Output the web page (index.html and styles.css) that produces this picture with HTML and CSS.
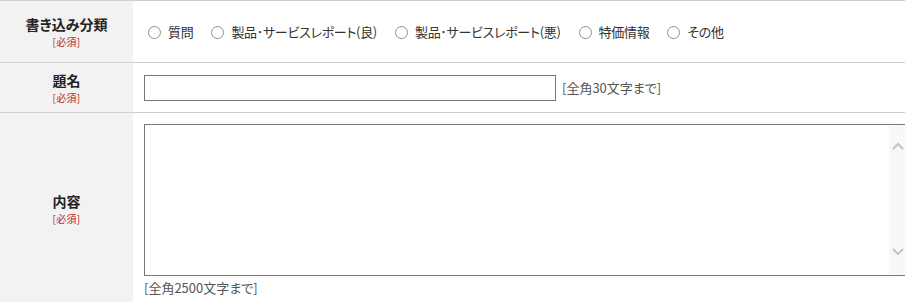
FILE: index.html
```html
<!DOCTYPE html>
<html lang="ja">
<head>
    <meta charset="UTF-8">
    <meta name="viewport" content="width=device-width, initial-scale=1.0">
    <title>投稿フォーム</title>
    <link rel="stylesheet" href="styles.css">
</head>
<body>
    <form class="form-table" id="postForm">
        <div class="form-row row-type">
            <div class="row-head">
                <span class="head-title">書き込み分類</span>
                <span class="required">[必須]</span>
            </div>
            <div class="row-body">
                <label class="radio-item"><input type="radio" name="category" value="1"><span>質問</span></label>
                <label class="radio-item"><input type="radio" name="category" value="2"><span>製品･サービスレポート(良)</span></label>
                <label class="radio-item"><input type="radio" name="category" value="3"><span>製品･サービスレポート(悪)</span></label>
                <label class="radio-item"><input type="radio" name="category" value="4"><span>特価情報</span></label>
                <label class="radio-item"><input type="radio" name="category" value="5"><span>その他</span></label>
            </div>
        </div>

        <div class="form-row row-title">
            <div class="row-head">
                <span class="head-title">題名</span>
                <span class="required">[必須]</span>
            </div>
            <div class="row-body">
                <input type="text" class="text-input" id="title">
                <span class="note">[全角30文字まで]</span>
            </div>
        </div>

        <div class="form-row row-content">
            <div class="row-head">
                <span class="head-title">内容</span>
                <span class="required">[必須]</span>
            </div>
            <div class="row-body body-column">
                <div class="textarea-wrap">
                    <textarea class="text-area" id="content"></textarea>
                    <!-- scrollbar look from the original page -->
                    <div class="fake-scroll">
                        <svg width="12" height="8" viewBox="0 0 12 8"><path d="M1 7 L6 2 L11 7" fill="none" stroke="#c4c4c4" stroke-width="2"/></svg>
                        <svg width="12" height="8" viewBox="0 0 12 8"><path d="M1 1 L6 6 L11 1" fill="none" stroke="#c4c4c4" stroke-width="2"/></svg>
                    </div>
                </div>
                <span class="note note-below">[全角2500文字まで]</span>
            </div>
        </div>
    </form>
</body>
</html>
```

FILE: styles.css
```css
/* General Styles */
html {
    overflow: hidden;
}

body {
    margin: 0;
    background-color: #fff;
    font-family: "Noto Sans CJK JP", "Liberation Sans", sans-serif;
    font-size: 13px;
    color: #333;
    font-feature-settings: "palt";
}

.form-table {
    width: 930px;
    border-top: 1px solid #cfcfcf;
}

.form-row {
    display: flex;
    border-bottom: 1px solid #cfcfcf;
}

.row-head {
    width: 133px;
    flex-shrink: 0;
    background-color: #f2f2f2;
    display: flex;
    flex-direction: column;
    align-items: center;
    justify-content: center;
}

.head-title {
    font-size: 14px;
    font-weight: bold;
    line-height: normal;
    color: #222;
}

.required {
    font-size: 10px;
    line-height: normal;
    color: #c32020;
    letter-spacing: 0.3px;
}

.row-body {
    flex: 1;
    display: flex;
    align-items: center;
    padding-left: 11px;
}

/* Row heights */
.row-type {
    height: 61px;
}

.row-title {
    height: 49px;
}

.row-content .row-body {
    padding-top: 11px;
    padding-bottom: 7px;
}

.body-column {
    flex-direction: column;
    align-items: flex-start;
}

/* Radio buttons */
.radio-item {
    display: flex;
    align-items: center;
    margin-right: 14px;
    line-height: 18px;
    letter-spacing: -0.3px;
    cursor: pointer;
}

.radio-item input {
    appearance: none;
    width: 13px;
    height: 13px;
    margin: 1px 7px 0 4px;
    border: 1px solid #8f8f8f;
    border-radius: 50%;
    background: #fff;
}

.radio-item input:checked {
    background: radial-gradient(circle, #333 35%, #fff 40%);
}

/* Inputs */
.text-input {
    box-sizing: border-box;
    width: 412px;
    height: 26px;
    margin: 1px 0 0;
    border: 1px solid #767676;
    padding: 2px 4px;
    font-family: inherit;
    font-size: 13px;
}

.note {
    margin-left: 6px;
    color: #555;
    line-height: 18px;
}

.note-below {
    margin-left: 0;
    margin-top: 3px;
}

.textarea-wrap {
    position: relative;
    width: 763px;
    height: 152px;
}

.text-area {
    box-sizing: border-box;
    display: block;
    width: 100%;
    height: 100%;
    margin: 0;
    border: 1px solid #767676;
    padding: 4px;
    resize: none;
    overflow: hidden;
    font-family: inherit;
    font-size: 13px;
}

.fake-scroll {
    position: absolute;
    top: 1px;
    right: 1px;
    bottom: 1px;
    width: 17px;
    background-color: #f8f8f8;
    display: flex;
    flex-direction: column;
    justify-content: space-between;
    align-items: center;
    padding: 17px 0 19px;
    box-sizing: border-box;
}
```
